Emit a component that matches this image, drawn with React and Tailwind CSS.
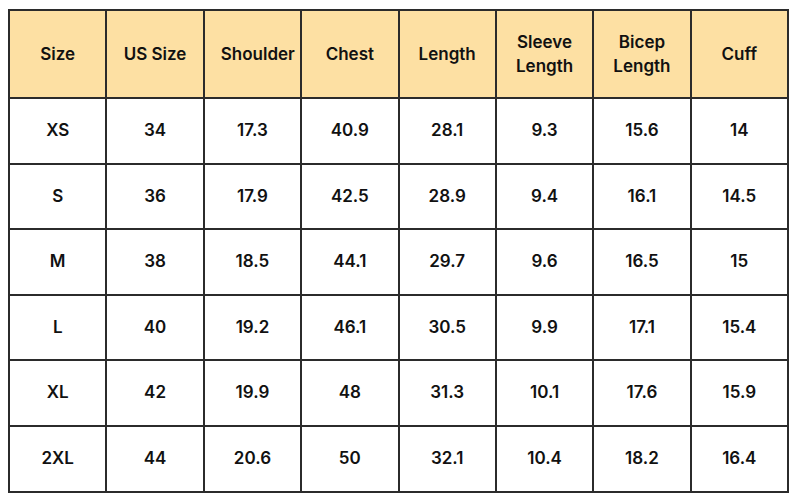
import React from "react";

const headers = ["Size", "US Size", "Shoulder", "Chest", "Length", "Sleeve Length", "Bicep Length", "Cuff"];

const rows = [
  ["XS", "34", "17.3", "40.9", "28.1", "9.3", "15.6", "14"],
  ["S", "36", "17.9", "42.5", "28.9", "9.4", "16.1", "14.5"],
  ["M", "38", "18.5", "44.1", "29.7", "9.6", "16.5", "15"],
  ["L", "40", "19.2", "46.1", "30.5", "9.9", "17.1", "15.4"],
  ["XL", "42", "19.9", "48", "31.3", "10.1", "17.6", "15.9"],
  ["2XL", "44", "20.6", "50", "32.1", "10.4", "18.2", "16.4"],
];

const App = () => {
  return (
    <div
      className="w-[800px] h-[500px] bg-white pl-[8px] pt-[9px]"
      style={{ fontFamily: "Inter, 'Open Sans', sans-serif" }}
    >
      <table className="w-[781px] border-collapse table-fixed text-[17px] font-semibold text-[#111]">
        <thead>
          <tr className="h-[88px] bg-[#fde0a3]">
            {headers.map((h) => (
              <th
                key={h}
                className="border-2 border-[#2b2b2b] px-4 font-semibold leading-[24px] text-center align-middle"
              >
                {h}
              </th>
            ))}
          </tr>
        </thead>
        <tbody>
          {rows.map((r) => (
            <tr key={r[0]} className="h-[65.6px]">
              {r.map((c, i) => (
                <td key={i} className="border-2 border-[#2b2b2b] text-center align-middle">
                  {c}
                </td>
              ))}
            </tr>
          ))}
        </tbody>
      </table>
    </div>
  );
};

export default App;
